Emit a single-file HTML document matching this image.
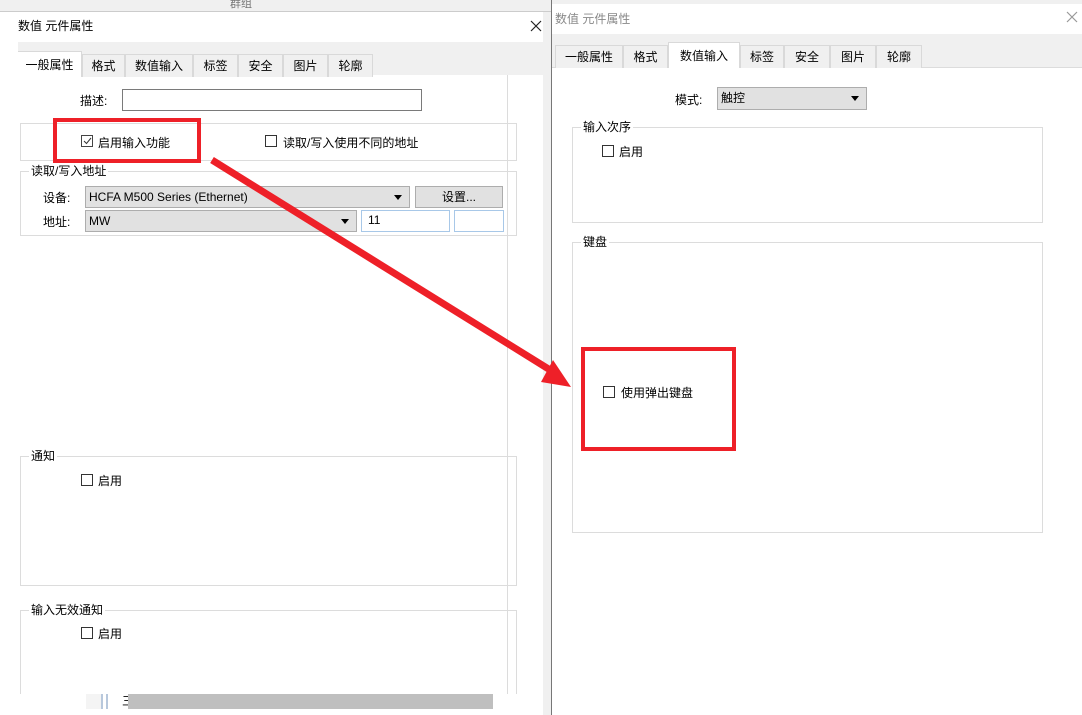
<!DOCTYPE html>
<html><head><meta charset="utf-8"><style>
*{margin:0;padding:0;box-sizing:border-box}
body{width:1082px;height:715px;position:relative;overflow:hidden;background:#fff;font-family:"Liberation Sans","Noto Sans CJK SC",sans-serif;font-size:12px;color:#000}
.a{position:absolute}
.tab{position:absolute;height:23px;border:1px solid #d9d9d9;border-bottom:none;background:#f0f0f0;text-align:center;line-height:22px;font-size:12px}
.tab.s{background:#fff;height:26px;top:-3px;line-height:26px}
.grp{position:absolute;border:1px solid #dcdcdc}
.lg{position:absolute;background:#fff;padding:0 2px;top:-9px;left:8px;line-height:16px}
.cb{position:absolute;width:12px;height:12px;border:1px solid #333;background:#fff}
.sel{position:absolute;background:#e1e1e1;border:1px solid #adadad;line-height:20px;padding-left:3px}
.sel:after{content:"";position:absolute;right:7px;top:8px;border:4px solid transparent;border-top:5px solid #000}
.in{position:absolute;border:1px solid #a8c8e8;background:#fff;line-height:19px;padding-left:6px}
.red{position:absolute;border:4px solid #ee2028}
</style></head><body>
<div class="a" style="left:0;top:0;width:552px;height:12px;background:#f0f0f0;border-bottom:1px solid #ccc"></div>
<div class="a" style="left:230px;top:0;font-size:11px;color:#777;line-height:9px">群组</div>
<div class="a" style="left:18px;top:12px;width:525px;height:30px;background:#fff"></div>
<div class="a" style="left:18px;top:17px;font-size:12px;line-height:18px">数值 元件属性</div>
<svg class="a" style="left:530px;top:20px" width="12" height="12"><path d="M1 1L11 11M11 1L1 11" stroke="#222" stroke-width="1.2"/></svg>
<div class="a" style="left:18px;top:42px;width:525px;height:33px;background:#f0f0f0"></div>
<div class="a" style="left:18px;top:75px;width:525px;height:620px;background:#fff"></div>
<div class="a" style="left:507px;top:75px;width:1px;height:620px;background:#dcdcdc"></div>
<div class="a" style="left:18px;top:54px;width:525px;height:21px">
<div class="tab s" style="left:0;width:64px;border-left:none">一般属性</div>
<div class="tab" style="left:64px;width:43px">格式</div>
<div class="tab" style="left:107px;width:68px">数值输入</div>
<div class="tab" style="left:175px;width:45px">标签</div>
<div class="tab" style="left:220px;width:45px">安全</div>
<div class="tab" style="left:265px;width:45px">图片</div>
<div class="tab" style="left:310px;width:45px">轮廓</div>
</div>
<div class="a" style="left:80px;top:92px">描述:</div>
<div class="a" style="left:122px;top:89px;width:300px;height:22px;border:1px solid #7a7a7a"></div>
<div class="grp" style="left:20px;top:123px;width:497px;height:38px"></div>
<div class="cb" style="left:81px;top:135px;border-color:#444"></div>
<svg class="a" style="left:81px;top:135px" width="12" height="12"><path d="M3 6L5.5 8.5L10 3" stroke="#333" stroke-width="1" fill="none"/></svg>
<div class="a" style="left:98px;top:134px">启用输入功能</div>
<div class="cb" style="left:265px;top:135px"></div>
<div class="a" style="left:283px;top:134px">读取/写入使用不同的地址</div>
<div class="grp" style="left:20px;top:171px;width:497px;height:65px"><div class="lg">读取/写入地址</div></div>
<div class="a" style="left:43px;top:189px">设备:</div>
<div class="sel" style="left:85px;top:186px;width:325px;height:22px">HCFA M500 Series (Ethernet)</div>
<div class="a" style="left:415px;top:186px;width:88px;height:22px;background:#e1e1e1;border:1px solid #adadad;text-align:center;line-height:20px">设置...</div>
<div class="a" style="left:43px;top:213px">地址:</div>
<div class="sel" style="left:85px;top:210px;width:272px;height:22px">MW</div>
<div class="in" style="left:361px;top:210px;width:89px;height:22px">11</div>
<div class="in" style="left:454px;top:210px;width:50px;height:22px"></div>
<div class="grp" style="left:20px;top:456px;width:497px;height:130px"><div class="lg" style="left:8px">通知</div></div>
<div class="cb" style="left:81px;top:474px"></div>
<div class="a" style="left:98px;top:472px">启用</div>
<div class="grp" style="left:20px;top:610px;width:497px;height:100px"><div class="lg">输入无效通知</div></div>
<div class="cb" style="left:81px;top:627px"></div>
<div class="a" style="left:98px;top:625px">启用</div>
<div class="a" style="left:0;top:694px;width:552px;height:21px;background:#fff"></div>
<div class="a" style="left:86px;top:694px;width:15px;height:15px;background:#f4f4f4"></div>
<div class="a" style="left:101px;top:694px;width:2px;height:15px;background:#b8c8dc"></div>
<div class="a" style="left:106px;top:694px;width:2px;height:15px;background:#b8c8dc"></div>
<div class="a" style="left:122px;top:692px;font-size:12px">三</div>
<div class="a" style="left:128px;top:694px;width:365px;height:15px;background:#bfbfbf"></div>
<div class="a" style="left:543px;top:12px;width:8px;height:703px;background:#f0f0f0"></div>
<div class="a" style="left:551px;top:0;width:1px;height:715px;background:#777"></div>
<div class="a" style="left:552px;top:0;width:530px;height:4px;background:#f0f0f0"></div>
<div class="a" style="left:552px;top:4px;width:530px;height:30px;background:#fff"></div>
<div class="a" style="left:555px;top:10px;color:#888;line-height:18px">数值 元件属性</div>
<svg class="a" style="left:1066px;top:11px" width="12" height="12"><path d="M1 1L11 11M11 1L1 11" stroke="#999" stroke-width="1.2"/></svg>
<div class="a" style="left:552px;top:34px;width:530px;height:34px;background:#f0f0f0"></div>
<div class="a" style="left:552px;top:67px;width:530px;height:1px;background:#dcdcdc"></div>
<div class="a" style="left:555px;top:45px;width:527px;height:22px">
<div class="tab" style="left:0;width:68px">一般属性</div>
<div class="tab" style="left:68px;width:45px">格式</div>
<div class="tab s" style="left:113px;width:72px;z-index:1">数值输入</div>
<div class="tab" style="left:185px;width:44px">标签</div>
<div class="tab" style="left:229px;width:46px">安全</div>
<div class="tab" style="left:275px;width:46px">图片</div>
<div class="tab" style="left:321px;width:46px">轮廓</div>
</div>
<div class="a" style="left:675px;top:91px">模式:</div>
<div class="sel" style="left:717px;top:87px;width:150px;height:23px;line-height:21px">触控</div>
<div class="grp" style="left:572px;top:127px;width:471px;height:96px"><div class="lg">输入次序</div></div>
<div class="cb" style="left:602px;top:145px"></div>
<div class="a" style="left:619px;top:143px">启用</div>
<div class="grp" style="left:572px;top:242px;width:471px;height:291px"><div class="lg">键盘</div></div>
<div class="cb" style="left:603px;top:386px"></div>
<div class="a" style="left:621px;top:384px">使用弹出键盘</div>
<div class="red" style="left:53px;top:118px;width:148px;height:45px"></div>
<div class="red" style="left:581px;top:347px;width:155px;height:104px"></div>
<svg class="a" style="left:0;top:0" width="1082" height="715">
<line x1="212" y1="160" x2="555" y2="373" stroke="#ee2028" stroke-width="7"/>
<polygon points="571,387 541,382 553,360" fill="#ee2028"/>
</svg>
</body></html>
